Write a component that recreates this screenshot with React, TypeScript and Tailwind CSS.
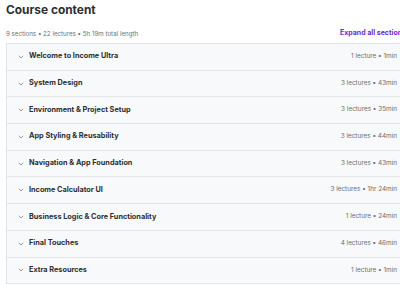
import React from "react";

const sections = [
  ["Welcome to Income Ultra", "1 lecture • 1min"],
  ["System Design", "3 lectures • 43min"],
  ["Environment & Project Setup", "3 lectures • 35min"],
  ["App Styling & Reusability", "3 lectures • 44min"],
  ["Navigation & App Foundation", "3 lectures • 43min"],
  ["Income Calculator UI", "3 lectures • 1hr 24min"],
  ["Business Logic & Core Functionality", "1 lecture • 24min"],
  ["Final Touches", "4 lectures • 46min"],
  ["Extra Resources", "1 lecture • 1min"],
];

function Chevron() {
  return (
    <svg width="6" height="4" viewBox="0 0 6 4" className="shrink-0">
      <path d="M0.8 0.8 L3 3 L5.2 0.8" fill="none" stroke="#8a8f93" strokeWidth="0.9" />
    </svg>
  );
}

export default function App() {
  return (
    <div
      className="w-[400px] h-[285px] overflow-hidden bg-white"
      style={{ fontFamily: "Inter, 'Noto Sans', sans-serif" }}
    >
      <div className="w-[412px] pl-[6px]">
        <h2 className="pt-[3px] h-[24px] text-[11.9px] leading-[14px] font-bold text-[#2d2f31]">
          Course content
        </h2>
        <div className="flex items-center justify-between h-[19px] pr-[6px]">
          <span className="text-[6.2px] text-[#6a6f73]">
            9 sections • 22 lectures • 5h 19m total length
          </span>
          <span className="text-[7px] font-bold text-[#6d28d2] whitespace-nowrap">
            Expand all sections
          </span>
        </div>
        <div className="border-t border-l border-[#e1e5e8] bg-[#f7f9fa]">
          {sections.map(([t, m]) => (
            <div
              key={t}
              className="flex items-center h-[26.7px] border-b border-[#e1e5e8] pl-[11px] pr-[15px]"
            >
              <Chevron />
              <span className="ml-[5px] text-[7.3px] font-bold text-[#2d2f31] whitespace-nowrap">
                {t}
              </span>
              <span className="ml-auto text-[6.4px] text-[#6a6f73] whitespace-nowrap">{m}</span>
            </div>
          ))}
        </div>
      </div>
    </div>
  );
}
